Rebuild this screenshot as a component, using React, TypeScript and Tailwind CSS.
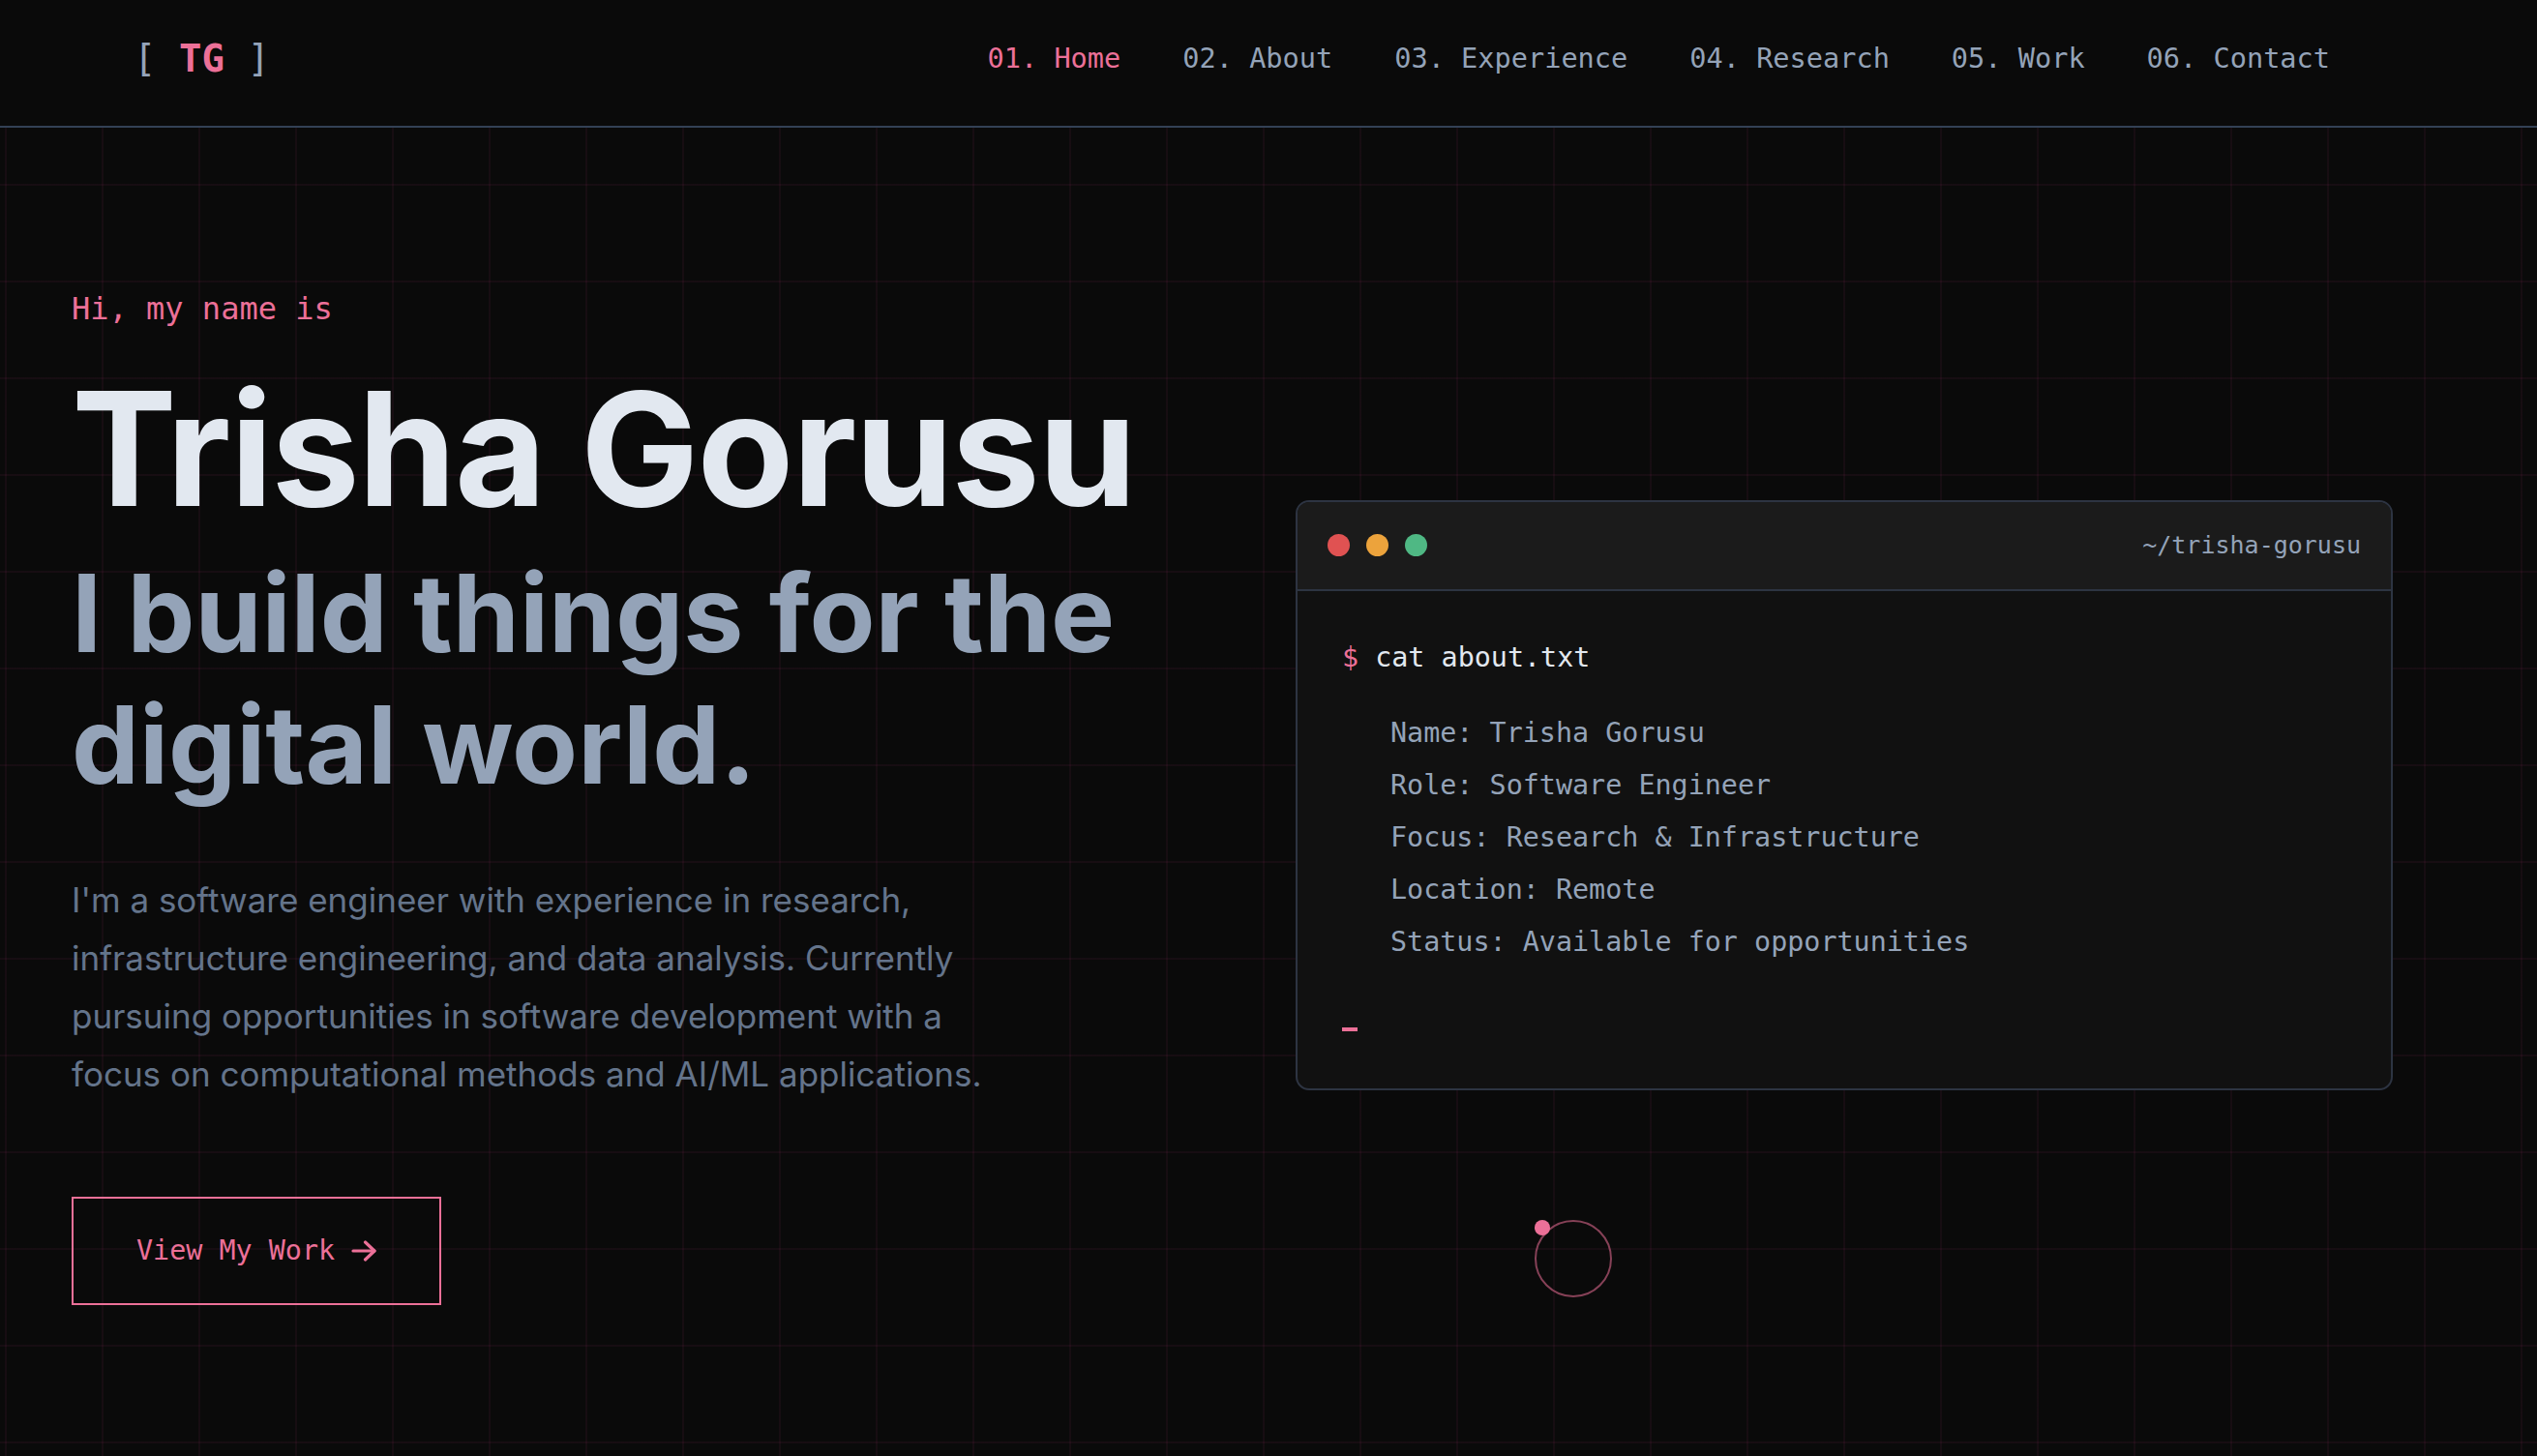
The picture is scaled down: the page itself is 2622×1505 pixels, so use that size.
const mono = "font-['DejaVu_Sans_Mono',monospace]";

const navItems = [
  { num: "01.", label: "Home", active: true },
  { num: "02.", label: "About" },
  { num: "03.", label: "Experience" },
  { num: "04.", label: "Research" },
  { num: "05.", label: "Work" },
  { num: "06.", label: "Contact" },
];

const aboutLines = [
  "Name: Trisha Gorusu",
  "Role: Software Engineer",
  "Focus: Research & Infrastructure",
  "Location: Remote",
  "Status: Available for opportunities",
];

function Terminal() {
  return (
    <div className="-mt-[4px] overflow-hidden rounded-[14px] border-2 border-[#2d3442] bg-[#111111]">
      <div className="flex h-[92px] items-center justify-between border-b-2 border-[#2d3442] bg-[#1b1b1b] px-[31px]">
        <div className="flex gap-[17px]">
          <span className="h-[23px] w-[23px] rounded-full bg-[#e05252]" />
          <span className="h-[23px] w-[23px] rounded-full bg-[#eca33c]" />
          <span className="h-[23px] w-[23px] rounded-full bg-[#4fb884]" />
        </div>
        <span className={`${mono} text-[25px] text-[#94a3b8]`}>~/trisha-gorusu</span>
      </div>
      <div className={`${mono} pb-[40px] pl-[46px] pt-[48px] text-[28.4px]`}>
        <div className="leading-[42px]">
          <span className="text-[#ec7098]">$</span>{" "}
          <span className="text-[#e2e8f0]">cat about.txt</span>
        </div>
        <div className="mt-[30px] pl-[50px] text-[#94a3b8]">
          {aboutLines.map((l) => (
            <div key={l} className="leading-[54px]">
              {l}
            </div>
          ))}
        </div>
        <div className="mt-[42px] flex h-[42px] items-center">
          <span className="h-[4px] w-[16px] bg-[#ec7098]" />
        </div>
      </div>
    </div>
  );
}

export default function App() {
  return (
    <div className="relative h-[1505px] overflow-hidden bg-[#0a0a0a] bg-[linear-gradient(to_right,rgba(236,72,153,0.06)_2px,transparent_2px),linear-gradient(to_bottom,rgba(236,72,153,0.06)_2px,transparent_2px)] bg-[size:100px_100px] bg-[position:5px_90px] font-['Inter',sans-serif]">
      <header className="flex h-[132px] items-center justify-between border-b-2 border-[#334155] bg-[#0a0a0a] pb-[10px] pl-[138px] pr-[214px]">
        <div className={`${mono} text-[39px] leading-none`}>
          <span className="text-[#94a3b8]">[</span>{" "}
          <span className="font-bold text-[#ec7098]">TG</span>{" "}
          <span className="text-[#94a3b8]">]</span>
        </div>
        <nav className={`${mono} flex gap-[64px] text-[28.6px]`}>
          {navItems.map((item) => (
            <a
              key={item.label}
              className={item.active ? "text-[#ec7098]" : "text-[#94a3b8]"}
            >
              {item.num} {item.label}
            </a>
          ))}
        </nav>
      </header>

      <main className="grid h-[1373px] grid-cols-2 items-center gap-[131px] pl-[74px] pr-[149px] pt-[10px]">
        <div>
          <p className={`${mono} text-[32px] leading-[40px] text-[#ec7098]`}>Hi, my name is</p>
          <h1 className="mt-[43px] text-[163px] font-bold leading-none tracking-[-0.01em] text-[#e2e8f0]">
            Trisha Gorusu
          </h1>
          <h2 className="mt-[21px] text-[111px] font-bold leading-[136px] text-[#94a3b8]">
            I build things for the digital world.
          </h2>
          <p className="mt-[62px] max-w-[980px] text-[35px] leading-[60px] text-[#64748b]">
            I'm a software engineer with experience in research, infrastructure engineering, and
            data analysis. Currently pursuing opportunities in software development with a focus on
            computational methods and AI/ML applications.
          </p>
          <button
            className={`${mono} mt-[97px] inline-flex items-center gap-[17px] border-2 border-[#ec7098] px-[65px] py-[34px] text-[28.4px] leading-[40px] text-[#ec7098]`}
          >
            View My Work
            <svg width="26" height="22" viewBox="0 0 26 22" fill="none" stroke="currentColor" strokeWidth="3.2" strokeLinecap="round" strokeLinejoin="round">
              <path d="M2 11h22" />
              <path d="M14.5 2l9.5 9-9.5 9" />
            </svg>
          </button>
        </div>
        <Terminal />
      </main>

      {/* cursor follower */}
      <div className="pointer-events-none absolute left-[1586px] top-[1261px] h-[80px] w-[80px] rounded-full border-2 border-[#ec7098]/55" />
      <div className="pointer-events-none absolute left-[1586px] top-[1261px] h-[16px] w-[16px] rounded-full bg-[#ec7098]" />
    </div>
  );
}
